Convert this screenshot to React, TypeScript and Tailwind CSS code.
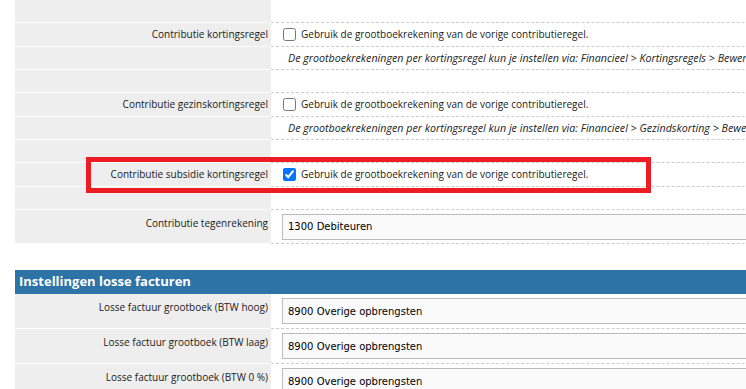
const labelFont = { fontFamily: '"Open Sans", "Liberation Sans", sans-serif' };

type RowProps = {
  label?: string;
  height: string;
  children?: React.ReactNode;
  alignTop?: boolean;
};

function Row({ label, height, children, alignTop }: RowProps) {
  return (
    <div className={`grid grid-cols-[256px_1fr] ${height}`}>
      <div
        className={`flex justify-end border-b border-white bg-[#eeeeee] pr-[3px] text-[10px] text-[#1a1a1a] ${
          alignTop ? 'items-start pt-[6px]' : 'items-center'
        }`}
      >
        {label}
      </div>
      <div className="flex items-center border-b border-dashed border-[#cccccc]">
        {children}
      </div>
    </div>
  );
}

function CheckRow({ label, checked }: { label: string; checked?: boolean }) {
  return (
    <Row label={label} height="h-[24px]">
      <div className="flex items-center pl-[12px]">
        <input type="checkbox" defaultChecked={checked} className="m-0 h-[13px] w-[13px]" />
        <span className="ml-[5px] text-[10px] text-[#1a1a1a]">
          Gebruik de grootboekrekening van de vorige contributieregel.
        </span>
      </div>
    </Row>
  );
}

function HintRow({ text }: { text: string }) {
  return (
    <Row height="h-[23px]">
      <span className="whitespace-nowrap pl-[17px] pt-[1px] text-[10.7px] italic text-[#222]">
        {text}
      </span>
    </Row>
  );
}

function SelectRow({ label, value, height }: { label: string; value: string; height: string }) {
  return (
    <Row label={label} height={height} alignTop>
      <div
        className="ml-[11px] flex h-[26px] w-[600px] items-center border border-[#bbbbbb] bg-[#fafafa] pl-[5px] text-[10px] text-black"
        style={{ fontFamily: '"DejaVu Sans", Verdana, sans-serif' }}
      >
        {value}
      </div>
    </Row>
  );
}

export default function App() {
  return (
    <div className="relative h-[389px] w-[746px] overflow-hidden bg-white" style={labelFont}>
      <div className="w-[1000px] pl-[15px]">
        <Row height="h-[23px]" />
        <CheckRow label="Contributie kortingsregel" />
        <HintRow text="De grootboekrekeningen per kortingsregel kun je instellen via: Financieel > Kortingsregels > Bewerken" />
        <Row height="h-[23px]" />
        <CheckRow label="Contributie gezinskortingsregel" />
        <HintRow text="De grootboekrekeningen per kortingsregel kun je instellen via: Financieel > Gezindskorting > Bewerken" />
        <Row height="h-[23px]" />
        <CheckRow label="Contributie subsidie kortingsregel" checked />
        <Row height="h-[23px]" />
        <SelectRow label="Contributie tegenrekening" value="1300 Debiteuren" height="h-[34px]" />

        <div className="h-[26px]" />

        <div className="flex h-[24px] items-center bg-[#2d73a5] pl-[4px] text-[13px] font-bold text-white">
          Instellingen losse facturen
        </div>
        <SelectRow label="Losse factuur grootboek (BTW hoog)" value="8900 Overige opbrengsten" height="h-[35px]" />
        <SelectRow label="Losse factuur grootboek (BTW laag)" value="8900 Overige opbrengsten" height="h-[35px]" />
        <SelectRow label="Losse factuur grootboek (BTW 0 %)" value="8900 Overige opbrengsten" height="h-[35px]" />
      </div>

      {/* annotation */}
      <div className="absolute left-[86px] top-[157px] h-[36px] w-[565px] border-[5px] border-[#ed1c24]" />
    </div>
  );
}
